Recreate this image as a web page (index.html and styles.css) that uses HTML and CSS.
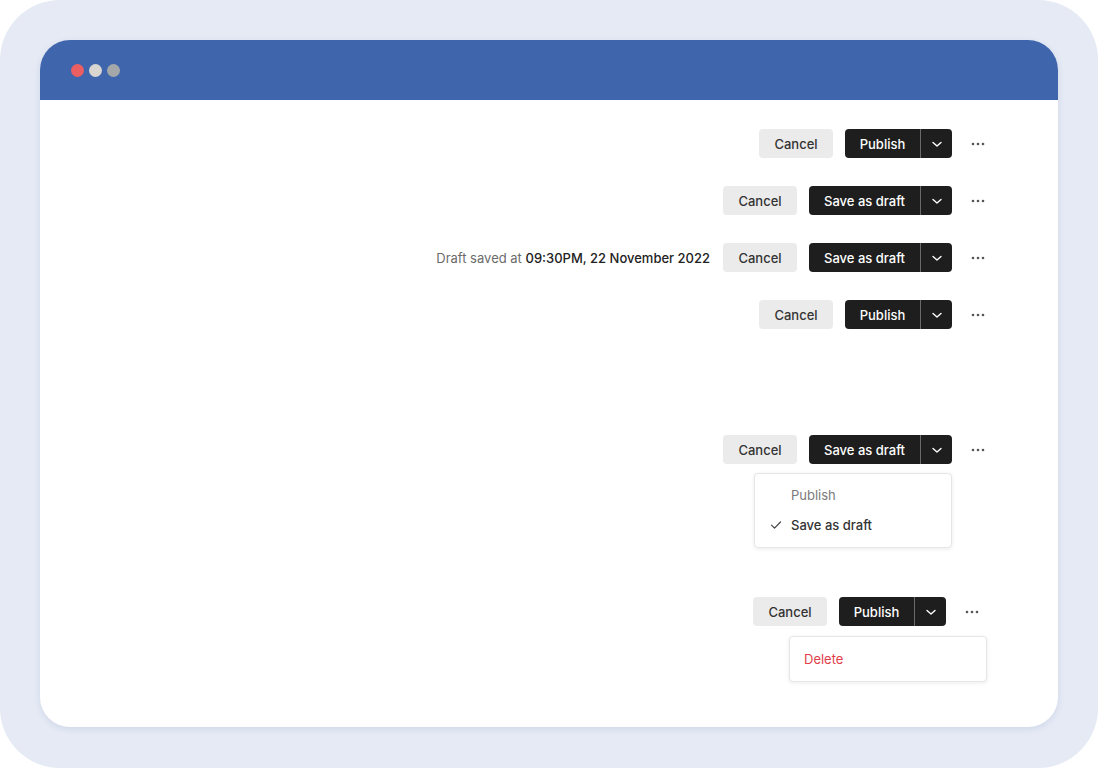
FILE: index.html
```html
<!DOCTYPE html>
<html lang="en">
<head>
  <meta charset="UTF-8" />
  <title>Publish actions</title>
  <link rel="stylesheet" href="styles.css">
</head>
<body>

  <div class="frame">
    <div class="window">

      <!-- Title bar -->
      <div class="titlebar">
        <span class="light red"></span>
        <span class="light beige"></span>
        <span class="light grey"></span>
      </div>

      <div class="content">

        <div class="row">
          <button class="btn btn-cancel">Cancel</button>
          <div class="split">
            <button class="split-main publish">Publish</button>
            <button class="split-toggle"><svg width="12" height="12" viewBox="0 0 12 12"><path d="M2 4.5l4 3.5 4-3.5" fill="none" stroke="#fff" stroke-width="1.4" stroke-linecap="round" stroke-linejoin="round"/></svg></button>
          </div>
          <button class="more"><svg width="14" height="4" viewBox="0 0 14 4"><circle cx="2" cy="2" r="1.3"/><circle cx="7" cy="2" r="1.3"/><circle cx="12" cy="2" r="1.3"/></svg></button>
        </div>

        <div class="row">
          <button class="btn btn-cancel">Cancel</button>
          <div class="split">
            <button class="split-main draft">Save as draft</button>
            <button class="split-toggle"><svg width="12" height="12" viewBox="0 0 12 12"><path d="M2 4.5l4 3.5 4-3.5" fill="none" stroke="#fff" stroke-width="1.4" stroke-linecap="round" stroke-linejoin="round"/></svg></button>
          </div>
          <button class="more"><svg width="14" height="4" viewBox="0 0 14 4"><circle cx="2" cy="2" r="1.3"/><circle cx="7" cy="2" r="1.3"/><circle cx="12" cy="2" r="1.3"/></svg></button>
        </div>

        <div class="row">
          <span class="saved-note">Draft saved at <b>09:30PM, 22 November 2022</b></span>
          <button class="btn btn-cancel">Cancel</button>
          <div class="split">
            <button class="split-main draft">Save as draft</button>
            <button class="split-toggle"><svg width="12" height="12" viewBox="0 0 12 12"><path d="M2 4.5l4 3.5 4-3.5" fill="none" stroke="#fff" stroke-width="1.4" stroke-linecap="round" stroke-linejoin="round"/></svg></button>
          </div>
          <button class="more"><svg width="14" height="4" viewBox="0 0 14 4"><circle cx="2" cy="2" r="1.3"/><circle cx="7" cy="2" r="1.3"/><circle cx="12" cy="2" r="1.3"/></svg></button>
        </div>

        <div class="row">
          <button class="btn btn-cancel">Cancel</button>
          <div class="split">
            <button class="split-main publish">Publish</button>
            <button class="split-toggle"><svg width="12" height="12" viewBox="0 0 12 12"><path d="M2 4.5l4 3.5 4-3.5" fill="none" stroke="#fff" stroke-width="1.4" stroke-linecap="round" stroke-linejoin="round"/></svg></button>
          </div>
          <button class="more"><svg width="14" height="4" viewBox="0 0 14 4"><circle cx="2" cy="2" r="1.3"/><circle cx="7" cy="2" r="1.3"/><circle cx="12" cy="2" r="1.3"/></svg></button>
        </div>

        <!-- Split menu open -->
        <div class="row row-menu">
          <button class="btn btn-cancel">Cancel</button>
          <div class="split">
            <button class="split-main draft">Save as draft</button>
            <button class="split-toggle"><svg width="12" height="12" viewBox="0 0 12 12"><path d="M2 4.5l4 3.5 4-3.5" fill="none" stroke="#fff" stroke-width="1.4" stroke-linecap="round" stroke-linejoin="round"/></svg></button>
            <div class="menu menu-split">
              <div class="menu-item muted">Publish</div>
              <div class="menu-item checked"><svg width="12" height="12" viewBox="0 0 12 12"><path d="M1.5 6.2l3 3 6-6.2" fill="none" stroke="#444" stroke-width="1.2" stroke-linecap="round" stroke-linejoin="round"/></svg>Save as draft</div>
            </div>
          </div>
          <button class="more"><svg width="14" height="4" viewBox="0 0 14 4"><circle cx="2" cy="2" r="1.3"/><circle cx="7" cy="2" r="1.3"/><circle cx="12" cy="2" r="1.3"/></svg></button>
        </div>

        <!-- More menu open -->
        <div class="row row-more">
          <button class="btn btn-cancel">Cancel</button>
          <div class="split">
            <button class="split-main publish">Publish</button>
            <button class="split-toggle"><svg width="12" height="12" viewBox="0 0 12 12"><path d="M2 4.5l4 3.5 4-3.5" fill="none" stroke="#fff" stroke-width="1.4" stroke-linecap="round" stroke-linejoin="round"/></svg></button>
          </div>
          <div class="more-wrap">
            <button class="more"><svg width="14" height="4" viewBox="0 0 14 4"><circle cx="2" cy="2" r="1.3"/><circle cx="7" cy="2" r="1.3"/><circle cx="12" cy="2" r="1.3"/></svg></button>
            <div class="menu menu-more">
              <div class="menu-item danger">Delete</div>
            </div>
          </div>
        </div>

      </div>
    </div>
  </div>

</body>
</html>
```

FILE: styles.css
```css
body, html {
  margin: 0;
  padding: 0;
  background: #fff;
  font-family: Inter, "Noto Sans", Arial, sans-serif;
}

.frame {
  width: 1098px;
  height: 768px;
  box-sizing: border-box;
  padding: 40px 40px 41px;
  background-color: #e5eaf5;
  border-radius: 60px;
}

.window {
  height: 100%;
  background-color: #fff;
  border-radius: 30px;
  overflow: hidden;
  box-shadow: 0 2px 6px rgba(60, 80, 130, 0.12);
  display: flex;
  flex-direction: column;
}

.titlebar {
  height: 60px;
  flex-shrink: 0;
  background-color: #3f65ad;
  display: flex;
  align-items: center;
  gap: 5px;
  padding-left: 31px;
}

.light {
  width: 13px;
  height: 13px;
  border-radius: 50%;
}

.light.red { background-color: #eb5e62; }
.light.beige { background-color: #d9d6d1; }
.light.grey { background-color: #a4a8a8; }

.content {
  display: flex;
  flex-direction: column;
  align-items: flex-end;
  padding: 29px 66px 0 0;
}

.row {
  display: flex;
  align-items: center;
  height: 29px;
  margin-bottom: 28px;
}

.row-menu {
  margin-top: 78px;
  margin-bottom: 133px;
}

.row-more {
  margin-right: 6px;
}

button {
  font-family: inherit;
  border: none;
  cursor: pointer;
}

.btn {
  height: 29px;
  padding: 0;
  border-radius: 4px;
  font-size: 13px;
  font-weight: 500;
}

.btn-cancel {
  background-color: #ebebeb;
  color: #333;
  width: 74px;
}

.saved-note {
  font-size: 13px;
  color: #6b6b6b;
  margin-right: 13px;
}

.saved-note b {
  font-weight: 500;
  color: #222;
}

.split {
  position: relative;
  display: flex;
  height: 29px;
  margin-left: 12px;
  background-color: #1e1e1e;
  border-radius: 4px;
}

.split-main {
  background: transparent;
  color: #fff;
  font-size: 13px;
  font-weight: 500;
  padding: 0;
  height: 29px;
  border-right: 1px solid #6a6a6a;
}

.split-main.publish { width: 76px; }
.split-main.draft { width: 112px; }

.split-toggle {
  background: transparent;
  width: 31px;
  height: 29px;
  display: flex;
  align-items: center;
  justify-content: center;
  padding: 0;
}

.more {
  width: 28px;
  height: 29px;
  margin-left: 12px;
  background: transparent;
  display: flex;
  align-items: center;
  justify-content: center;
  padding: 0;
  fill: #555;
}

.more-wrap {
  position: relative;
}

.menu {
  position: absolute;
  right: 0;
  width: 198px;
  box-sizing: border-box;
  background: #fff;
  border: 1px solid #e6e6e6;
  border-radius: 4px;
  box-shadow: 0 1px 4px rgba(0, 0, 0, 0.08);
  font-size: 13px;
  z-index: 2;
}

.menu-split {
  top: 38px;
  right: 0;
  padding: 6px 0 7px;
}

.menu-more {
  top: 39px;
  right: -1px;
  padding: 7px 0;
}

.menu-item {
  height: 30px;
  display: flex;
  align-items: center;
  padding-left: 36px;
  color: #333;
  font-weight: 500;
}

.menu-item.muted {
  color: #7a7a7a;
  font-weight: 400;
}

.menu-item.checked {
  padding-left: 15px;
}

.menu-item.checked svg {
  margin-right: 9px;
}

.menu-item.danger {
  padding-left: 14px;
  color: #e0404a;
  font-weight: 400;
}
```
